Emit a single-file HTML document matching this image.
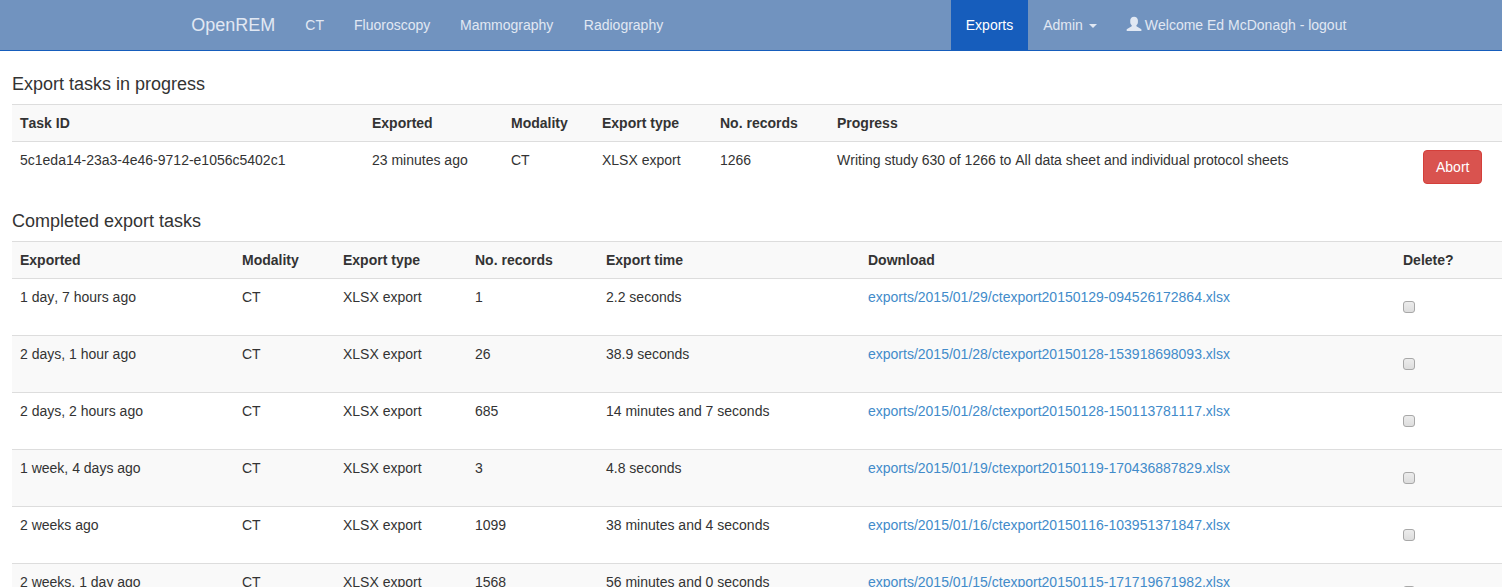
<!DOCTYPE html>
<html lang="en">
<head>
<meta charset="utf-8">
<title>OpenREM - Exports</title>
<style>
*{box-sizing:border-box}
html,body{margin:0;padding:0}
html{overflow:hidden}
body{width:1524px;height:587px;overflow:hidden;background:#fff;color:#333;
  font-family:"Liberation Sans",sans-serif;font-size:14px;line-height:20px;font-kerning:none;font-feature-settings:"kern" 0,"liga" 0}
.navbar{position:absolute;left:0;top:0;width:1524px;height:51px;background:#7193bf;border-bottom:1px solid #165dbc}
.navbar .it{position:absolute;top:0;height:50px;padding:15px 0;line-height:20px;color:#e1e8f3;font-size:14px;white-space:nowrap}
.navbar .brand{font-size:18px;left:191.3px}
.navbar .active{background:#165dbc;color:#fff;left:951px;width:77px;text-align:center}
.caret{position:absolute;top:24px;width:0;height:0;border-top:4px solid #e1e8f3;border-right:4px solid transparent;border-left:4px solid transparent}
.user{position:absolute;left:1126px;top:16px}
h4{position:absolute;left:12px;margin:0;font-size:18px;line-height:20px;font-weight:400;color:#333;white-space:nowrap}
table{position:absolute;left:12px;width:1500px;border-collapse:collapse;border-spacing:0;table-layout:fixed}
th,td{padding:8px;line-height:20px;vertical-align:top;border-top:1px solid #ddd;text-align:left;white-space:nowrap;overflow:visible}
th{font-weight:700}
tr.s>th,tr.s>td{background:#f9f9f9}
a{color:#428bca;text-decoration:none}
.btn{display:inline-block;padding:6px 12px;font-size:14px;line-height:20px;color:#fff;background:#d9534f;border:1px solid #d43f3a;border-radius:4px;margin-top:0}
#t1{top:104px}
#t2{top:241px}
#t2 td{height:57px}
.cb{display:block;width:12px;height:12px;margin:14px 0 0 0;border:1px solid #a8a8a8;border-radius:3px;background:linear-gradient(#ececec,#dddddd)}
</style>
</head>
<body>
<div class="navbar">
  <div class="it brand">OpenREM</div>
  <div class="it" style="left:305.3px">CT</div>
  <div class="it" style="left:354px">Fluoroscopy</div>
  <div class="it" style="left:460px">Mammography</div>
  <div class="it" style="left:583.8px">Radiography</div>
  <div class="it active">Exports</div>
  <div class="it" style="left:1043.2px">Admin</div>
  <span class="caret" style="left:1089.2px"></span>
  <svg class="user" width="16" height="16" viewBox="0 0 16 16"><path fill="#e1e8f3" d="M8.07 0.7C10.3 0.7 11.9 2.2 11.9 4.3L11.9 6.2C11.9 7.6 11.2 8.6 10.45 9.1L10.45 10.2L15.4 13.2L15.4 15L0.7 15L0.7 13.2L5.7 10.2L5.7 9.1C4.95 8.6 4.25 7.6 4.25 6.2L4.25 4.3C4.25 2.2 5.85 0.7 8.07 0.7Z"/></svg>
  <div class="it" style="left:1144.8px">Welcome Ed McDonagh - logout</div>
</div>

<h4 style="top:74px">Export tasks in progress</h4>
<table id="t1">
  <colgroup><col style="width:352px"><col style="width:139px"><col style="width:91px"><col style="width:118px"><col style="width:117px"><col style="width:586px"><col></colgroup>
  <tr class="s"><th>Task ID</th><th>Exported</th><th>Modality</th><th>Export type</th><th>No. records</th><th>Progress</th><th></th></tr>
  <tr><td>5c1eda14-23a3-4e46-9712-e1056c5402c1</td><td>23 minutes ago</td><td>CT</td><td>XLSX export</td><td>1266</td><td>Writing study 630 of 1266 to All data sheet and individual protocol sheets</td><td><span class="btn">Abort</span></td></tr>
</table>

<h4 style="top:211px">Completed export tasks</h4>
<table id="t2">
  <colgroup><col style="width:222px"><col style="width:101px"><col style="width:132px"><col style="width:131px"><col style="width:262px"><col style="width:535px"><col></colgroup>
  <tr class="s"><th>Exported</th><th>Modality</th><th>Export type</th><th>No. records</th><th>Export time</th><th>Download</th><th>Delete?</th></tr>
  <tr><td>1 day, 7 hours ago</td><td>CT</td><td>XLSX export</td><td>1</td><td>2.2 seconds</td><td><a>exports/2015/01/29/ctexport20150129-094526172864.xlsx</a></td><td><span class="cb"></span></td></tr>
  <tr class="s"><td>2 days, 1 hour ago</td><td>CT</td><td>XLSX export</td><td>26</td><td>38.9 seconds</td><td><a>exports/2015/01/28/ctexport20150128-153918698093.xlsx</a></td><td><span class="cb"></span></td></tr>
  <tr><td>2 days, 2 hours ago</td><td>CT</td><td>XLSX export</td><td>685</td><td>14 minutes and 7 seconds</td><td><a>exports/2015/01/28/ctexport20150128-150113781117.xlsx</a></td><td><span class="cb"></span></td></tr>
  <tr class="s"><td>1 week, 4 days ago</td><td>CT</td><td>XLSX export</td><td>3</td><td>4.8 seconds</td><td><a>exports/2015/01/19/ctexport20150119-170436887829.xlsx</a></td><td><span class="cb"></span></td></tr>
  <tr><td>2 weeks ago</td><td>CT</td><td>XLSX export</td><td>1099</td><td>38 minutes and 4 seconds</td><td><a>exports/2015/01/16/ctexport20150116-103951371847.xlsx</a></td><td><span class="cb"></span></td></tr>
  <tr class="s"><td>2 weeks, 1 day ago</td><td>CT</td><td>XLSX export</td><td>1568</td><td>56 minutes and 0 seconds</td><td><a>exports/2015/01/15/ctexport20150115-171719671982.xlsx</a></td><td><span class="cb"></span></td></tr>
</table>
</body>
</html>
